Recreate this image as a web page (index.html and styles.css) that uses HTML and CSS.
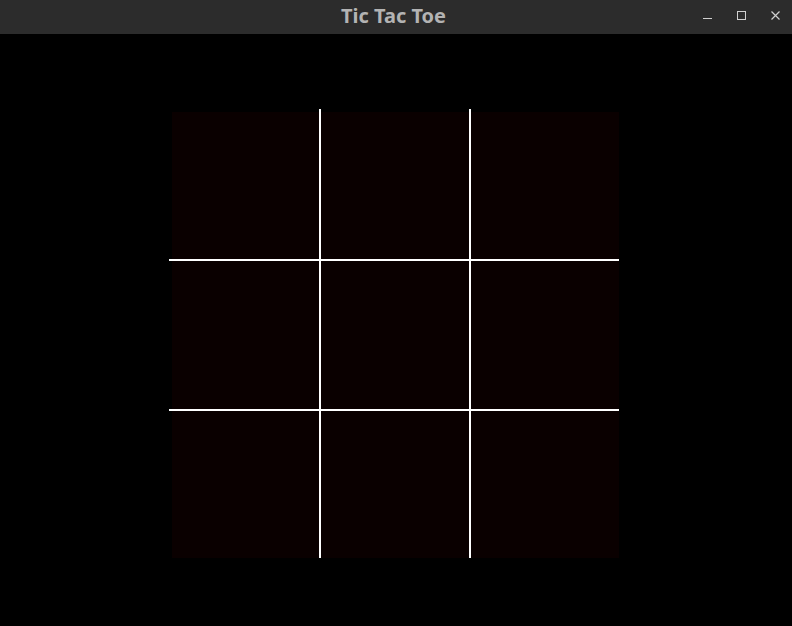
FILE: index.html
```html
<!DOCTYPE html>
<html>
<head>
<meta charset="utf-8">
<title>Tic Tac Toe</title>
<link rel="stylesheet" href="styles.css">
</head>
<body>
<div class="window">
  <header class="titlebar">
    <div class="title">Tic Tac Toe</div>
    <div class="controls">
      <svg class="ctl" width="12" height="12" viewBox="0 0 12 12"><path d="M1 8.5h9" stroke="#d0d0d0" stroke-width="1"/></svg>
      <svg class="ctl" width="12" height="12" viewBox="0 0 12 12"><rect x="1.5" y="1.5" width="8" height="8" fill="none" stroke="#d0d0d0" stroke-width="1"/></svg>
      <svg class="ctl" width="12" height="12" viewBox="0 0 12 12"><path d="M1.5 1.5l8 8M9.5 1.5l-8 8" stroke="#d0d0d0" stroke-width="1.2"/></svg>
    </div>
  </header>
  <main class="content">
    <div class="board">
      <div class="grid">
        <div class="cell"></div><div class="cell"></div><div class="cell"></div>
        <div class="cell"></div><div class="cell"></div><div class="cell"></div>
        <div class="cell"></div><div class="cell"></div><div class="cell"></div>
      </div>
      <div class="line v v1"></div>
      <div class="line v v2"></div>
      <div class="line h h1"></div>
      <div class="line h h2"></div>
    </div>
  </main>
</div>
</body>
</html>
```
FILE: styles.css
```css
html, body {
  margin: 0;
  padding: 0;
  background: #000;
  width: 792px;
  height: 626px;
  overflow: hidden;
}
.window {
  display: flex;
  flex-direction: column;
  height: 626px;
}
.titlebar {
  height: 34px;
  flex: 0 0 34px;
  background: #2c2c2c;
  position: relative;
  display: flex;
  align-items: center;
  justify-content: center;
}
.title {
  font-family: "Noto Sans", "DejaVu Sans", sans-serif;
  font-weight: bold;
  font-size: 20px;
  color: #b3b3b3;
  margin-top: -3px;
  margin-left: -5px;
}
.controls {
  position: absolute;
  right: 10px;
  top: 10px;
  display: flex;
  gap: 22px;
}
.ctl {
  display: block;
}
.content {
  flex: 1;
  background: #000;
  padding: 75px 0 0 169px;
}
.board {
  position: relative;
  box-sizing: border-box;
  width: 450px;
  height: 450px;
  padding: 3px 0 0 3px;
}
.grid {
  display: grid;
  grid-template-columns: 147px 148px 148px;
  grid-template-rows: 147px 148px 147px;
  gap: 2px;
  width: 447px;
}
.cell {
  background: #0a0000;
}
.line {
  position: absolute;
  background: #fff;
}
.v {
  width: 2px;
  top: 0;
  height: 449px;
}
.v1 { left: 150px; }
.v2 { left: 300px; }
.h {
  height: 2px;
  left: 0;
  width: 450px;
}
.h1 { top: 150px; }
.h2 { top: 300px; }
```
